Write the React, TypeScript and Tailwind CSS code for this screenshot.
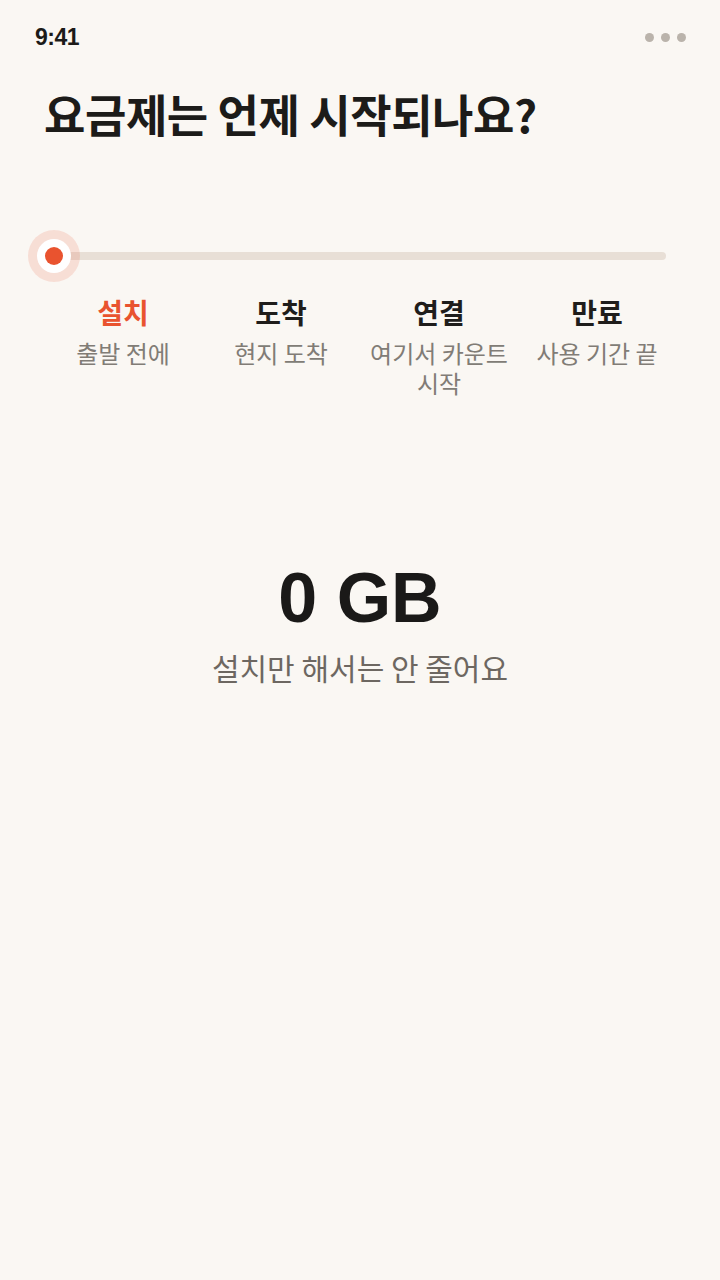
import React from "react";

const steps = [
  { title: "설치", sub: "출발 전에", active: true },
  { title: "도착", sub: "현지 도착", active: false },
  { title: "연결", sub: "여기서 카운트 시작", active: false },
  { title: "만료", sub: "사용 기간 끝", active: false },
];

export default function App() {
  return (
    <div className="min-h-screen w-[720px] bg-[#faf7f3] pt-[20px] font-['Noto_Sans_CJK_KR',sans-serif] text-[#1c1b19]">
      {/* status bar */}
      <div className="flex h-[34px] items-center justify-between pl-[35px] pr-[34px]">
        <span className="font-['Liberation_Sans',sans-serif] text-[23px] font-bold leading-[34px] tracking-[-0.02em] text-[#1c1b19]">
          9:41
        </span>
        <div className="flex items-center gap-[7px]">
          <span className="block h-[9px] w-[9px] rounded-full bg-[#bab3ab]" />
          <span className="block h-[9px] w-[9px] rounded-full bg-[#bab3ab]" />
          <span className="block h-[9px] w-[9px] rounded-full bg-[#bab3ab]" />
        </div>
      </div>

      {/* title */}
      <h1 className="mt-[35px] pl-[44px] text-[45px] font-bold leading-[50px] tracking-[-0.01em] text-[#1c1b19]">
        요금제는 언제 시작되나요?
      </h1>

      {/* slider */}
      <div className="relative ml-[28px] mt-[91px] h-[52px] w-[638px]">
        <div className="absolute left-[26px] right-0 top-[22px] h-[8px] rounded-full bg-[#e8dfd6]" />
        <div className="absolute left-0 top-0 flex h-[52px] w-[52px] items-center justify-center rounded-full bg-[#e9532f]/15">
          <div className="flex h-[34px] w-[34px] items-center justify-center rounded-full bg-white">
            <div className="h-[18px] w-[18px] rounded-full bg-[#e9532f]" />
          </div>
        </div>
      </div>

      {/* labels */}
      <div className="mt-[12px] grid grid-cols-4 px-[44px] text-center">
        {steps.map((s) => (
          <div key={s.title} className="flex flex-col items-center">
            <div
              className={
                s.active
                  ? "text-[28px] font-bold leading-[36px] text-[#e9532f]"
                  : "text-[28px] font-bold leading-[36px] text-[#1f1d1b]"
              }
            >
              {s.title}
            </div>
            <div className="mt-[8px] text-[24px] leading-[30px] text-[#817c76]">
              {s.sub}
            </div>
          </div>
        ))}
      </div>

      {/* value */}
      <div className="mt-[160px] flex flex-col items-center">
        <div className="font-['Liberation_Sans',sans-serif] text-[70px] font-bold leading-[80px] text-[#1a1918]">
          0 GB
        </div>
        <div className="mt-[11px] text-[30px] leading-[36px] text-[#6d6761]">
          설치만 해서는 안 줄어요
        </div>
      </div>
    </div>
  );
}
